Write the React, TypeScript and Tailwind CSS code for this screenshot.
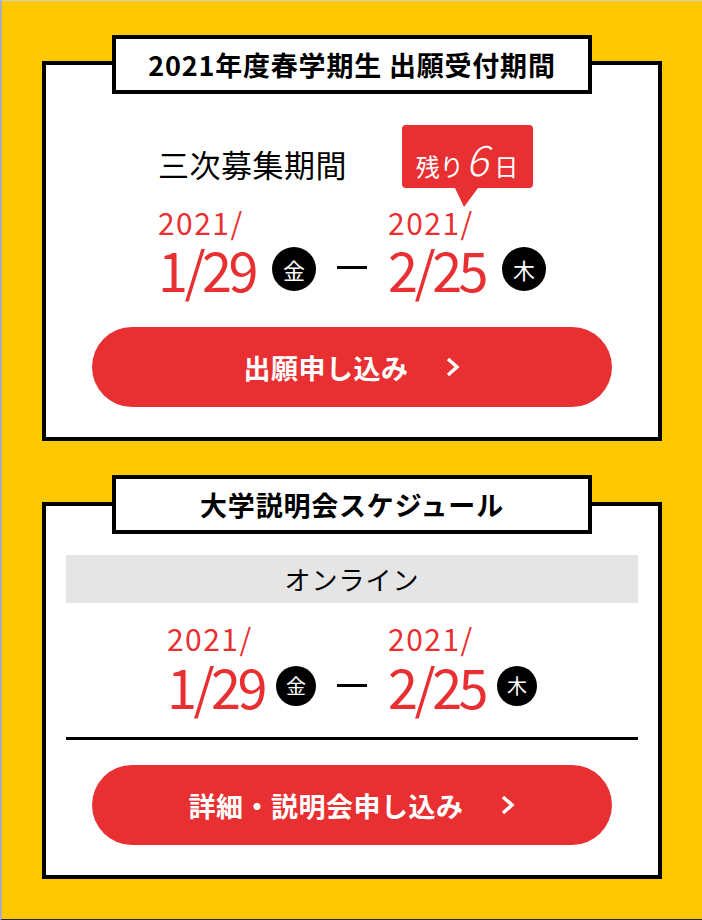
import React from "react";

const FONT = "font-['Noto_Sans_CJK_JP','Noto_Sans',sans-serif]";

function Chevron() {
  return (
    <svg width="16" height="22" viewBox="0 0 16 22" className="shrink-0">
      <polyline points="3,3 12,11 3,19" fill="none" stroke="white" strokeWidth="3.5" strokeLinejoin="miter" />
    </svg>
  );
}

function Button({ label }: { label: string }) {
  return (
    <div className="mx-auto w-[520px] h-[80px] rounded-full bg-[#E83032] flex items-center justify-center gap-[36px]">
      <span className="text-[27px] font-bold text-white leading-none tracking-[0.5px]">{label}</span>
      <Chevron />
    </div>
  );
}

function TitleBox({ text, mt }: { text: string; mt: string }) {
  return (
    <div className={`${mt} mx-auto w-[480px] h-[59px] border-4 border-black bg-white flex items-center justify-center`}>
      <span className="text-[27px] font-bold text-black leading-none tracking-[0.8px]">{text}</span>
    </div>
  );
}

function DayCircle({ ch, size }: { ch: string; size: "lg" | "sm" }) {
  return (
    <div
      className={
        size === "lg"
          ? "w-[44px] h-[44px] rounded-full bg-black text-white flex items-center justify-center text-[22px] leading-none ml-[17px]"
          : "w-[40px] h-[40px] rounded-full bg-black text-white flex items-center justify-center text-[20px] leading-none ml-[12px]"
      }
    >
      {ch}
    </div>
  );
}

function DateBlock({ md, day, size }: { md: string; day: string; size: "lg" | "sm" }) {
  return (
    <div className="flex flex-col">
      <div className="text-[30px] leading-none text-[#E83032] tracking-[1.5px]">2021/</div>
      <div className={size === "lg" ? "mt-[5px] flex items-center" : "mt-[6px] flex items-center"}>
        <span className="text-[54px] leading-none text-[#E83032] tracking-[-3.5px]">{md}</span>
        <DayCircle ch={day} size={size} />
      </div>
    </div>
  );
}

export default function App() {
  return (
    <div
      className={`${FONT} w-[702px] h-[920px] bg-[#FDC800] border-l-2 border-l-[#aab0b4] border-t border-t-[#cfcfcf] border-b border-b-[#222] px-[40px] pt-[60px]`}
    >
      {/* Card 1 */}
      <div className="border-4 border-black bg-white pb-[30px]">
        <TitleBox text="2021年度春学期生 出願受付期間" mt="-mt-[30px]" />
        <div className="mt-[31px] flex justify-center items-start">
          <div className="flex flex-col">
            <div className="h-[82px] pt-[23px]">
              <div className="w-0 whitespace-nowrap text-[31px] leading-none text-black tracking-[0.5px]">三次募集期間</div>
            </div>
            <DateBlock md="1/29" day="金" size="lg" />
          </div>
          <div className="mt-[141px] mx-[21px] w-[30px] h-[3px] bg-black" />
          <div className="flex flex-col">
            <div className="h-[82px] flex flex-col items-center">
              <div className="w-[131px] h-[63px] rounded-[4px] bg-[#E83032] text-white flex items-baseline justify-center pt-[12px]">
                <span className="text-[24px] leading-none">残り</span>
                <span className="text-[42px] leading-none italic font-light ml-[2px] mr-[6px]">6</span>
                <span className="text-[24px] leading-none">日</span>
              </div>
              <svg width="131" height="19" viewBox="0 0 131 19" className="block">
                <polygon points="53,0 76,0 62,19" fill="#E83032" />
              </svg>
            </div>
            <DateBlock md="2/25" day="木" size="lg" />
          </div>
        </div>
        <div className="mt-[31px]">
          <Button label="出願申し込み" />
        </div>
      </div>

      {/* Card 2 */}
      <div className="mt-[61px] border-4 border-black bg-white pb-[30px]">
        <TitleBox text="大学説明会スケジュール" mt="-mt-[31px]" />
        <div className="mt-[21px] mx-[20px] h-[48px] bg-[#E5E5E5] flex items-center justify-center">
          <span className="text-[26px] leading-none text-black tracking-[1px]">オンライン</span>
        </div>
        <div className="mt-[20px] flex justify-center items-start">
          <DateBlock md="1/29" day="金" size="sm" />
          <div className="mt-[61px] mx-[21px] w-[30px] h-[3px] bg-black" />
          <DateBlock md="2/25" day="木" size="sm" />
        </div>
        <div className="mt-[24px] mx-[20px] h-[3px] bg-black" />
        <div className="mt-[25px]">
          <Button label="詳細・説明会申し込み" />
        </div>
      </div>
    </div>
  );
}
